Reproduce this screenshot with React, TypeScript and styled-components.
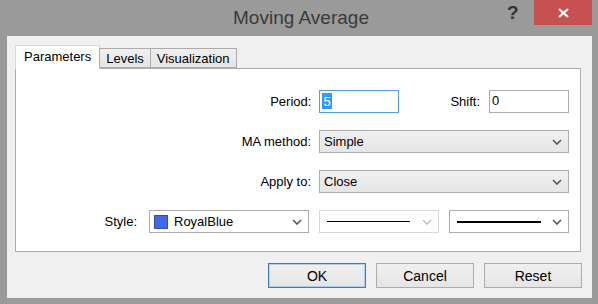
import React from 'react';
import styled, { createGlobalStyle } from 'styled-components';

const GlobalStyle = createGlobalStyle`
  html, body {
    margin: 0;
    padding: 0;
    background: #9a9a9a;
  }
  body {
    font-family: "Liberation Sans", Arial, sans-serif;
    font-size: 13px;
    color: #000;
  }
`;

const Window = styled.div`
  width: 598px;
  height: 304px;
  background: #9a9a9a;
  display: flex;
  flex-direction: column;
  box-sizing: border-box;
  padding: 0 6px 6px 7px;
`;

const TitleBar = styled.div`
  height: 36px;
  display: grid;
  grid-template-columns: 1fr auto 1fr;
  align-items: start;
`;

const Title = styled.div`
  grid-column: 2;
  font-size: 19px;
  color: #3a3a3a;
  padding-top: 7px;
  margin-left: 3px;
`;

const Controls = styled.div`
  grid-column: 3;
  justify-self: end;
  display: flex;
  align-items: flex-start;
`;

const HelpButton = styled.div`
  font-size: 19px;
  font-weight: bold;
  color: #333;
  width: 16px;
  padding-top: 2px;
  margin-right: 11px;
`;

const CloseButton = styled.div`
  width: 58px;
  height: 25px;
  background: #c75050;
  display: flex;
  align-items: center;
  justify-content: center;
`;

const Client = styled.div`
  flex: 1;
  background: #f0f0f0;
  display: flex;
  flex-direction: column;
  padding: 9px 11px 0 8px;
`;

const TabStrip = styled.div`
  display: flex;
  align-items: flex-end;
  height: 23px;
  position: relative;
  z-index: 1;
`;

const Tab = styled.div<{ $active?: boolean }>`
  box-sizing: border-box;
  height: ${(p) => (p.$active ? '24px' : '20px')};
  margin-bottom: ${(p) => (p.$active ? '-1px' : '0')};
  padding: ${(p) => (p.$active ? '3px 8px 0 8px' : '2px 6px 0 6px')};
  background: ${(p) => (p.$active ? '#ffffff' : 'linear-gradient(#f0f0f0, #e5e5e5)')};
  border: 1px solid ${(p) => (p.$active ? '#d9d9d9' : '#acacac')};
  border-bottom: ${(p) => (p.$active ? 'none' : '1px solid #acacac')};
  margin-left: ${(p) => (p.$active ? '0' : '-1px')};
  white-space: nowrap;
`;

const Panel = styled.div`
  height: 184px;
  box-sizing: border-box;
  background: #fff;
  border: 1px solid #adadad;
  display: flex;
  flex-direction: column;
  gap: 17px;
  padding: 21px 11px 0 0;
`;

const Row = styled.div`
  display: flex;
  align-items: center;
  justify-content: flex-end;
  height: 23px;
`;

const Label = styled.span<{ $gap?: number }>`
  margin-right: ${(p) => p.$gap ?? 8}px;
  white-space: nowrap;
`;

const TextBox = styled.div<{ $focused?: boolean }>`
  box-sizing: border-box;
  width: 80px;
  height: 23px;
  border: 1px solid ${(p) => (p.$focused ? '#569de5' : '#abadb3')};
  background: #fff;
  padding: 2px 0 0 2px;
  display: flex;
  align-items: flex-start;
`;

const Selected = styled.span`
  background: #3399ff;
  color: #fff;
  padding: 1px 1px 0 1px;
`;

const ShiftGroup = styled.div`
  display: flex;
  align-items: center;
  margin-left: 51px;
`;

const Combo = styled.div<{ $width: number; $white?: boolean; $disabled?: boolean }>`
  box-sizing: border-box;
  width: ${(p) => p.$width}px;
  height: 23px;
  border: 1px solid ${(p) => (p.$disabled ? '#d9d9d9' : '#acacac')};
  background: ${(p) => (p.$white ? '#fff' : 'linear-gradient(#f0f0f0, #e5e5e5)')};
  display: flex;
  align-items: center;
  padding: 0 6px 0 4px;
  gap: 6px;
`;

const ComboText = styled.span`
  flex: 1;
`;

const Swatch = styled.span`
  width: 14px;
  height: 14px;
  background: #4169e1;
  border: 1px solid #2f4fb8;
  box-sizing: border-box;
`;

const LineSample = styled.span<{ $thick?: boolean }>`
  flex: 1;
  height: ${(p) => (p.$thick ? 2 : 1)}px;
  background: #000;
  margin: 0 ${(p) => (p.$thick ? 5 : 6)}px 0 3px;
`;

const StyleRow = styled(Row)`
  gap: 10px;
`;

const ButtonRow = styled.div`
  display: flex;
  justify-content: flex-end;
  gap: 10px;
  margin-top: 11px;
  margin-right: -1px;
`;

const Button = styled.div<{ $default?: boolean }>`
  box-sizing: border-box;
  width: 98px;
  height: 25px;
  border: 1px solid ${(p) => (p.$default ? '#3c7fb1' : '#acacac')};
  box-shadow: ${(p) => (p.$default ? 'inset 0 0 0 1px #aed0ea' : 'none')};
  background: linear-gradient(#f0f0f0, #e5e5e5);
  display: flex;
  align-items: center;
  justify-content: center;
  font-size: 14px;
`;

function Chevron({ color = '#555' }: { color?: string }) {
  return (
    <svg width="10" height="6" viewBox="0 0 10 6">
      <path d="M1 1 L5 5 L9 1" fill="none" stroke={color} strokeWidth="1.6" />
    </svg>
  );
}

export default function App() {
  return (
    <>
      <GlobalStyle />
      <Window>
        <TitleBar>
          <Title>Moving Average</Title>
          <Controls>
            <HelpButton>?</HelpButton>
            <CloseButton>
              <svg width="11" height="10" viewBox="0 0 11 10">
                <path d="M1 1 L10 9 M10 1 L1 9" stroke="#fff" strokeWidth="2.2" />
              </svg>
            </CloseButton>
          </Controls>
        </TitleBar>
        <Client>
          <TabStrip>
            <Tab $active>Parameters</Tab>
            <Tab>Levels</Tab>
            <Tab>Visualization</Tab>
          </TabStrip>
          <Panel>
            <Row>
              <Label>Period:</Label>
              <TextBox $focused>
                <Selected>5</Selected>
              </TextBox>
              <ShiftGroup>
                <Label $gap={9}>Shift:</Label>
                <TextBox>0</TextBox>
              </ShiftGroup>
            </Row>
            <Row>
              <Label>MA method:</Label>
              <Combo $width={250}>
                <ComboText>Simple</ComboText>
                <Chevron />
              </Combo>
            </Row>
            <Row>
              <Label>Apply to:</Label>
              <Combo $width={250}>
                <ComboText>Close</ComboText>
                <Chevron />
              </Combo>
            </Row>
            <StyleRow>
              <Label $gap={2}>Style:</Label>
              <Combo $width={160} $white>
                <Swatch />
                <ComboText>RoyalBlue</ComboText>
                <Chevron />
              </Combo>
              <Combo $width={120} $white $disabled>
                <LineSample />
                <Chevron color="#c4c4c4" />
              </Combo>
              <Combo $width={120} $white>
                <LineSample $thick />
                <Chevron />
              </Combo>
            </StyleRow>
          </Panel>
          <ButtonRow>
            <Button $default>OK</Button>
            <Button>Cancel</Button>
            <Button>Reset</Button>
          </ButtonRow>
        </Client>
      </Window>
    </>
  );
}
